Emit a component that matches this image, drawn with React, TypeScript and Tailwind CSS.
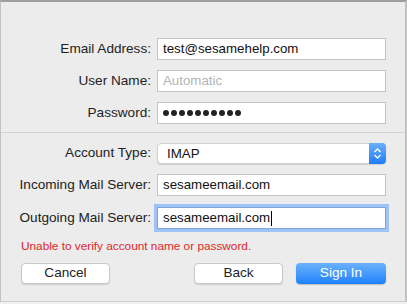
import React from "react";

const font = { fontFamily: '"Liberation Sans", Arial, sans-serif' };

function Label({ text }: { text: string }) {
  return (
    <div className="w-[156px] pr-[6px] text-right text-[13.6px] text-[#222]">
      {text}
    </div>
  );
}

function Field({ children, focused }: { children?: React.ReactNode; focused?: boolean }) {
  return (
    <div
      className={
        "flex h-[22px] w-[229px] items-center border bg-white pl-[5px] text-[13.3px] text-[#111] " +
        (focused
          ? "border-[#7aa6e0] shadow-[0_0_0_3px_#9fc4f4]"
          : "border-[#c4c4c4]")
      }
    >
      {children}
    </div>
  );
}

function Dots() {
  return (
    <div className="flex gap-[2px]">
      {Array.from({ length: 10 }).map((_, i) => (
        <div key={i} className="h-[6px] w-[6px] rounded-full bg-[#222]" />
      ))}
    </div>
  );
}

function Button({ text, primary }: { text: string; primary?: boolean }) {
  return (
    <button
      className={
        "flex h-[21px] items-center justify-center rounded-[4px] text-[13.6px] " +
        (primary
          ? "w-[90px] bg-gradient-to-b from-[#6ab2fb] to-[#1b80fa] text-white shadow-[0_1px_1px_rgba(0,0,0,0.2)]"
          : "w-[89px] border border-[#c9c9c9] bg-white text-[#222] shadow-[0_1px_1px_rgba(0,0,0,0.12)]")
      }
    >
      {text}
    </button>
  );
}

export default function App() {
  return (
    <div className="h-[304px] w-[407px] bg-[#f0f0f0]" style={font}>
      <div className="h-[302px] w-[407px] border-t-2 border-r-2 border-b border-l border-t-[#9e9e9e] border-r-[#c2c2c2] border-b-[#cfcfcf] border-l-[#c2c2c2] bg-[#ececec]">
        <div className="flex flex-col gap-[10px] pt-[36px]">
          <div className="flex items-center">
            <Label text="Email Address:" />
            <Field>test@sesamehelp.com</Field>
          </div>
          <div className="flex items-center">
            <Label text="User Name:" />
            <Field>
              <span className="text-[#b4b4b4]">Automatic</span>
            </Field>
          </div>
          <div className="flex items-center">
            <Label text="Password:" />
            <Field>
              <Dots />
            </Field>
          </div>
        </div>

        <div className="mt-[8px] h-px bg-[#d4d4d4]" />

        <div className="mt-[10px] flex items-center">
          <Label text="Account Type:" />
          <div className="flex h-[21px] w-[229px] items-center rounded-[4px] border border-[#d0d0d0] bg-white shadow-[0_1px_1px_rgba(0,0,0,0.12)]">
            <span className="flex-1 pl-[9px] text-[13.3px] text-[#111]">IMAP</span>
            <div className="-my-px -mr-px flex h-[21px] w-[17px] items-center justify-center rounded-r-[4px] bg-gradient-to-b from-[#6aaffc] to-[#1d7bf6]">
              <svg width="9" height="13" viewBox="0 0 9 13" fill="none">
                <path d="M1.5 5L4.5 2L7.5 5" stroke="white" strokeWidth="1.3" />
                <path d="M1.5 8L4.5 11L7.5 8" stroke="white" strokeWidth="1.3" />
              </svg>
            </div>
          </div>
        </div>

        <div className="mt-[10px] flex items-center">
          <Label text="Incoming Mail Server:" />
          <Field>sesameemail.com</Field>
        </div>

        <div className="mt-[11px] flex items-center">
          <Label text="Outgoing Mail Server:" />
          <Field focused>
            sesameemail.com
            <span className="ml-px inline-block h-[15px] w-px bg-black" />
          </Field>
        </div>

        <div className="mt-[10px] pl-[20px] text-[11.8px] leading-[14px] text-[#e0262b]">
          Unable to verify account name or password.
        </div>

        <div className="mt-[10px] flex items-center pl-[20px]">
          <Button text="Cancel" />
          <div className="flex-1" />
          <Button text="Back" />
          <div className="w-[13px]" />
          <Button text="Sign In" primary />
          <div className="w-[19px]" />
        </div>
      </div>
    </div>
  );
}
